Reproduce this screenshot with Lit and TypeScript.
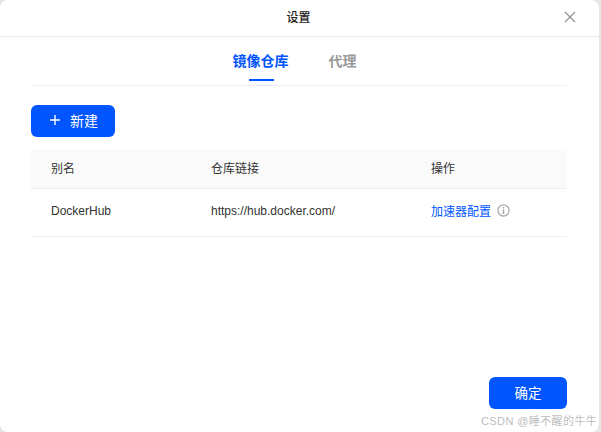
import { LitElement, html, css } from "lit";
import { customElement } from "lit/decorators.js";

@customElement("app-root")
export class AppRoot extends LitElement {
  static styles = css`
    :host {
      display: block;
      width: 601px;
      height: 432px;
      background: #e6e6e6;
      font-family: "Liberation Sans", "Noto Sans CJK SC", sans-serif;
      color: #333;
      overflow: hidden;
    }
    .dialog {
      position: relative;
      box-sizing: border-box;
      width: 599px;
      height: 432px;
      background: #fff;
      border-radius: 8px;
      display: flex;
      flex-direction: column;
    }
    .header {
      box-sizing: border-box;
      height: 37px;
      border-bottom: 1px solid #e8e8e8;
      display: flex;
      align-items: center;
      justify-content: center;
      position: relative;
      font-size: 12px;
      font-weight: 500;
      color: #222;
      padding: 0 2px 3px 0;
    }
    .close {
      position: absolute;
      left: 564px;
      top: 11px;
      width: 12px;
      height: 12px;
    }
    .body {
      flex: 1;
      display: flex;
      flex-direction: column;
      padding: 0 32px 23px 31px;
    }
    .tabs {
      box-sizing: border-box;
      height: 49px;
      border-bottom: 1px solid #efefef;
      display: flex;
      justify-content: center;
      gap: 40px;
      padding-right: 9px;
    }
    .tab {
      position: relative;
      font-size: 14px;
      font-weight: 700;
      color: #999;
      line-height: 49px;
      height: 48px;
    }
    .tab.active {
      color: #0055ff;
    }
    .tab.active::after {
      content: "";
      position: absolute;
      left: 16px;
      bottom: 4px;
      width: 25px;
      height: 2px;
      background: #0055ff;
    }
    .btn {
      border: none;
      background: #0055ff;
      color: #fff;
      font: inherit;
      border-radius: 6px;
      display: flex;
      align-items: center;
      justify-content: center;
      padding: 0 0 2px;
    }
    .new {
      margin-top: 19px;
      width: 84px;
      height: 32px;
      gap: 10px;
      font-size: 14px;
      align-self: flex-start;
      padding-left: 2px;
    }
    .new svg {
      width: 10px;
      height: 10px;
    }
    .table {
      margin-top: 12px;
      font-size: 12px;
      color: #333;
    }
    .row {
      display: grid;
      grid-template-columns: 160px 220px 1fr;
      padding-left: 20px;
      align-items: center;
      border-bottom: 1px solid #efefef;
      box-sizing: border-box;
    }
    .row.head {
      background: #fafafa;
      height: 40px;
      padding-bottom: 2px;
    }
    .row.item {
      height: 48px;
      padding-bottom: 4px;
    }
    .ops {
      display: flex;
      align-items: center;
      gap: 6px;
    }
    .link {
      color: #0055ff;
    }
    .info {
      width: 13px;
      height: 13px;
    }
    .footer {
      margin-top: auto;
      display: flex;
      justify-content: flex-end;
    }
    .ok {
      width: 78px;
      height: 32px;
      font-size: 13.5px;
      font-weight: 400;
    }
    .mark {
      position: absolute;
      left: 481px;
      top: 414px;
      font-size: 11px;
      line-height: 14px;
      color: #bdbdbd;
      white-space: nowrap;
      letter-spacing: 0.4px;
    }
  `;

  render() {
    return html`
      <div class="dialog">
        <div class="header">
          设置
          <svg class="close" viewBox="0 0 12 12" fill="none" stroke="#8a8d92" stroke-width="1.1">
            <path d="M1 1 L11 11 M11 1 L1 11"></path>
          </svg>
        </div>
        <div class="body">
          <div class="tabs">
            <div class="tab active">镜像仓库</div>
            <div class="tab">代理</div>
          </div>
          <button class="btn new">
            <svg viewBox="0 0 10 10" fill="none" stroke="#fff" stroke-width="1.4">
              <path d="M5 0 V10 M0 5 H10"></path>
            </svg>
            新建
          </button>
          <div class="table">
            <div class="row head">
              <div>别名</div>
              <div>仓库链接</div>
              <div>操作</div>
            </div>
            <div class="row item">
              <div>DockerHub</div>
              <div>https://hub.docker.com/</div>
              <div class="ops">
                <span class="link">加速器配置</span>
                <svg class="info" viewBox="0 0 13 13" fill="none" stroke="#a6a6a6" stroke-width="1.2">
                  <circle cx="6.5" cy="6.5" r="5.6"></circle>
                  <path d="M6.5 5.5 V10 M6.5 3 V4.4" stroke-width="1.5"></path>
                </svg>
              </div>
            </div>
          </div>
          <div class="footer">
            <button class="btn ok">确定</button>
          </div>
        </div>
        <div class="mark">CSDN @睡不醒的牛牛</div>
      </div>
    `;
  }
}
